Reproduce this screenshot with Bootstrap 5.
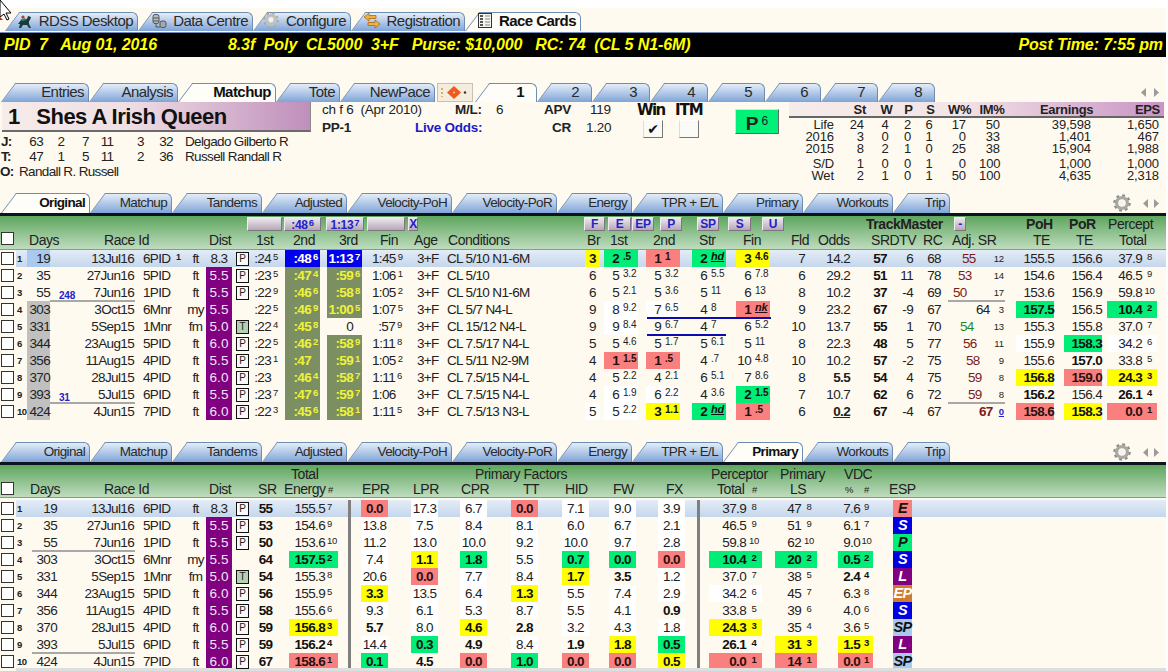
<!DOCTYPE html>
<html lang="en">
<head>
<meta charset="UTF-8">
<title>Race Cards</title>
<link href="https://cdn.jsdelivr.net/npm/bootstrap@5.3.3/dist/css/bootstrap.min.css" rel="stylesheet">
<style>
html, body { height: 671px; overflow: hidden; background: #fff; }
body { font: 13.5px/17px "Liberation Sans", Arial, sans-serif; letter-spacing: -.65px; color: #222; }
.pg { position: relative; width: 1166px; height: 671px; background: #fffaf0; overflow: hidden; }

/* tabs */
.topbar { height: 32px; padding-top: 12px; background: linear-gradient(#fff 8px, #fffaf0 8px); }
.tabrow { height: 20px; flex-wrap: nowrap; align-items: flex-end; }
.nav-link.rtab { position: relative; isolation: isolate; flex: none; height: 20px; padding: 0 5px 0 0; line-height: 19px; text-align: right; color: #2a2a2a; white-space: nowrap; }
.rtab::before, .rtab::after { content: ""; position: absolute; top: 0; bottom: 0; z-index: -1; background: linear-gradient(#e4edf8, #7fa4d8); border-top: 1px solid #6d8db5; }
.rtab::before { left: 0; width: 30px; border-left: 1px solid #6d8db5; transform-origin: left bottom; transform: skewX(-37deg); }
.rtab::after { left: 15px; right: 0; border-right: 1px solid #6d8db5; border-top-right-radius: 6px; }
.nav-link.rtab.on { z-index: 2; font-weight: 700; color: #111; }
.rtab.on::before, .rtab.on::after { background: #fffdf8; }
.tabrow.big { height: 19px; }
.big .nav-link.rtab { height: 19px; font-size: 15px; letter-spacing: -.55px; line-height: 18px; }
.nav-link.rtab svg { vertical-align: -2px; margin-right: 3px; }
.tab-ic { flex: none; width: 36px; height: 19px; margin: 0 2px; display: flex; align-items: center; justify-content: center; background: #f4ecdc; border: 1px solid #c8c0b0; }
.pager { flex: none; margin: 0 7px 0 auto; height: 19px; display: flex; align-items: center; gap: 6px; }
.gearbox { flex: none; margin: 0 7px 0 auto; height: 20px; display: flex; align-items: center; gap: 12px; }
.gearbox span { display: flex; gap: 4px; }

.raceband { height: 25px; background: #000; border-top: 1px solid #6d8db5; color: #ff0; font: italic 700 16px/24px "Liberation Sans", Arial, sans-serif; letter-spacing: -.1px; white-space: pre; padding: 0 3px 0 4px; }
.race-mid { margin-left: 71px; }
.tabwrap { margin-top: 26px; }

/* info block */
.info { height: 91px; }
.namebar { width: 309px; height: 30px; margin-left: 2px; padding-left: 6px; background: linear-gradient(90deg, #f6ece9, #f0dfe4 40%, #bf8fbc); border-bottom: 2px solid #6b6b6b; border-right: 1px solid #8a8a8a; color: #111; font: 700 22px/29px "Liberation Sans", Arial, sans-serif; letter-spacing: -.55px; white-space: pre; }
.namecol { flex: none; width: 316px; }
.jpad { padding-top: 2px; }
.jl { height: 15px; line-height: 15px; }
.midcol { flex: none; width: 473px; letter-spacing: -.25px; }
.il1 { height: 16px; line-height: 16px; }
.il2 { height: 19px; line-height: 19px; }
.winl { font: 700 15px/16px "DejaVu Sans", sans-serif; letter-spacing: -1px; color: #111; }
.win-t { letter-spacing: -1.6px; }
.livo { color: #1a1ac8; }
.vbox { height: 18px; margin-top: 2px; background: #fafaf6; border: 1px solid; border-color: #fff #777 #777 #ddd; font: 700 14px/16px "DejaVu Sans", sans-serif; color: #111; text-align: center; }
.pbtn.btn { position: absolute; left: 735px; top: 7px; width: 44px; height: 25px; padding: 0; border: 1px solid; border-color: #ddd #666 #666 #ddd; border-radius: 0; background: #00f078; font: 700 19px/22px "Liberation Sans", sans-serif; color: #222; }
.pbtn span { font-size: 12px; font-weight: 400; vertical-align: 5px; margin-left: 3px; }
.statcol { flex: none; width: 375px; font-size: 13px; letter-spacing: -.3px; }
.sh { height: 16px; line-height: 15px; background: linear-gradient(90deg, #f6ecea, #f3e4e6 45%, #c894c4); border-bottom: 2px solid #666; font-weight: 700; }
.sr { height: 12.2px; line-height: 12px; letter-spacing: -.1px; }
.sr.spaced { margin-top: 2px; }
.sr.sfirst { margin-top: 1px; }

/* grid strips */
.strip { display: grid; grid-auto-rows: 100%; white-space: nowrap; }
.blackline { height: 3px; background: #0d1420; }
.ghead { background: linear-gradient(#5ea65e, #bfdcbf); border-bottom: 1px solid #8d978d; }
.gh1 { height: 34px; }
.gh2 { height: 33px; }
.hstrip-a { height: 16px; line-height: 16px; font-size: 14px; letter-spacing: -.45px; }
.hstrip-b { height: 17px; line-height: 17px; font-size: 14px; letter-spacing: -.45px; }
.gh2 .hstrip-a { height: 17px; line-height: 19px; }
.gh2 .hstrip-b { height: 15px; line-height: 15px; }
.btn.hbtn { display: block; width: 100%; height: 14px; margin-top: 1px; padding: 0; border: 1px solid; border-color: #f0ecf0 #7d7480 #7d7480 #f0ecf0; border-radius: 0; background: linear-gradient(#efe8ef, #b4a8b6); color: #2222cc; font: 700 12px/12px "Liberation Sans", sans-serif; letter-spacing: -.3px; }
.btn.hbtn .up { width: auto; padding-left: 1px; }
.rw { height: 17px; line-height: 17px; }
.rw.hot { background: linear-gradient(#e4ecf7, #c5d7ec) right / calc(100% - 16px) 100% no-repeat; }
.rw.last { height: 15px; }
.botline { height: 3px; margin-left: 16px; background: #dedede; }
.rchk.form-check-input { display: block; width: 13px; height: 13px; margin: 2px 0 0; border: 1px solid #333; border-radius: 0; background: #fff; float: none; }
.rn { font-size: 9.5px; font-weight: 700; letter-spacing: -.5px; }
.days-g { background: #c0c0c0; }
.days-h { background: #a9c9ee; }
.gapn { color: #2222cc; font-size: 10px; font-weight: 700; line-height: 10px; letter-spacing: -.2px; align-self: end; }
.ptop { position: relative; top: -3px; font-size: 9px; font-weight: 700; }
.dist-p { background: #800080; color: #f1e6f1; font-size: 13.5px; letter-spacing: .1px; }
.pb { height: 14px; margin-top: 2px; border: 1px solid #111; background: #f8f8f8; font-size: 10px; line-height: 12px; text-align: center; letter-spacing: 0; }
.pb.tt { background: #b2d2b2; }
.up { display: inline-block; width: 9px; padding-left: 2px; text-align: left; font-size: 9.5px; letter-spacing: -.2px; vertical-align: 3px; line-height: 1; }
.up-e .up { width: 13px; padding-left: 2px; }
.up-v .up { width: 13px; padding: 0; text-align: center; }
.up-w .up { width: 15px; padding: 0; text-align: center; }
.up-x .up { width: 16px; padding: 0; text-align: center; }
.olv { background: #7b8f62; color: #f0f23a; font-weight: 700; }
.blu { background: #0000ee; color: #fff; font-weight: 700; }
.dg { display: inline-block; width: 15px; text-align: right; }
.dsp { font-size: 10px; margin-left: 4px; vertical-align: 3px; line-height: 1; letter-spacing: -.2px; }
.hd { font-style: italic; font-weight: 700; font-size: 11px; text-decoration: underline; }
.c-g { background: #00ee78; font-weight: 700; color: #111; }
.c-y { background: #ffff00; font-weight: 700; color: #111; }
.c-r { background: #fa8080; font-weight: 700; color: #2a1010; }
.c-b { font-weight: 700; color: #111; }
.c-w { background: #fff; }
.fw-sr { font-weight: 700; color: #111; }
.adj { color: #7a1a1a; }
.adj-k { color: #222; }
.adj-g { color: #1f8a1f; }
.rk { font-size: 9.5px; letter-spacing: -.1px; }
.rk-u { color: #2222cc; text-decoration: underline; font-weight: 700; }
.ruled { position: absolute; height: 2px; background: #a8a8a8; }
.ruled.bl { background: #0b0bb0; }
.sep { background: #7f7f7f; }
.esp { font: italic 700 14.5px/17px "Liberation Sans", sans-serif; text-align: center; letter-spacing: -.6px; }
.e-E { background: #fa8080; color: #111; }
.e-S { background: #0000e0; color: #fff; }
.e-P { background: #00ee78; color: #111; }
.e-L { background: #800080; color: #fff; }
.e-EP { background: #d07c30; color: #fff; }
.e-SP { background: #a9c9ee; color: #111; }
.grid2 { margin-top: 22px; }
.rows2 { margin-top: 2px; }
.cursor { position: absolute; left: 0; top: 0; z-index: 5; }
</style>
</head>
<body>
<div class="pg" id="pg"></div>

<script src="https://cdn.jsdelivr.net/npm/bootstrap@5.3.3/dist/js/bootstrap.bundle.min.js"></script>
<script>
const pg = document.getElementById('pg');

// one row of cells, given by their x edges; the gaps turn into empty grid tracks
function strip(cells, cls, ox) {
  let x = ox || 0, tracks = [], html = '';
  cells.forEach(c => {
    if (c[0] > x) { tracks.push((c[0] - x) + 'px'); html += '<div></div>'; }
    tracks.push((c[1] - c[0]) + 'px');
    html += '<div class="' + (c[2] || '') + '">' + (c[3] === undefined ? '' : c[3]) + '</div>';
    x = c[1];
  });
  return '<div class="strip ' + cls + '" style="grid-template-columns:' + tracks.join(' ') + '">' + html + '</div>';
}

function tabs(list, cls, start, extra) {
  let x = start, html = '';
  list.forEach(t => {
    if (t.raw) { html += t.raw; x = t.r; return; }
    html += '<a class="nav-link rtab' + (t.on ? ' on' : '') + '" style="width:' + (t.r - x) + 'px">' + t.l + '</a>';
    x = t.r;
  });
  return '<nav class="nav tabrow ' + cls + '" style="padding-left:' + start + 'px">' + html + (extra || '') + '</nav>';
}

const gear = (s, c1, c2) => '<svg width="' + s + '" height="' + s + '" viewBox="0 0 20 20"><circle cx="10" cy="10" r="8" fill="none" stroke="' + c2 + '" stroke-width="3.4" stroke-dasharray="3 3.28"/><circle cx="10" cy="10" r="6" fill="none" stroke="' + c1 + '" stroke-width="3.6"/><circle cx="10" cy="10" r="3" fill="#f7f3ea"/></svg>';
const arrows = '<svg width="6" height="9" viewBox="0 0 6 9"><path d="M5 0v9L0 4.5z" fill="#9a9a9a"/></svg><svg width="6" height="9" viewBox="0 0 6 9"><path d="M1 0v9l5-4.5z" fill="#9a9a9a"/></svg>';

const icHorse = '<svg width="15" height="13" viewBox="0 0 15 13"><path d="M1 9l3-4 6-1 1-3 3 1-1 3-1 1v3l2 4h-2l-2-3H6l-2 3H2l1-4z" fill="#1d3a3a"/><circle cx="6" cy="2" r="1.6" fill="#c33"/><path d="M4 4l4-1 1 2-4 1z" fill="#3a8a7a"/></svg>';
const icData = '<svg width="15" height="14" viewBox="0 0 15 14"><rect x="1" y="0.5" width="6" height="9" rx="2" fill="#b8bcc0" stroke="#555"/><rect x="8" y="7" width="6" height="6.5" rx="2" fill="#a0a8b0" stroke="#555"/><path d="M1 4h6M1 7h6" stroke="#555"/><path d="M4 10v3h4" fill="none" stroke="#555"/></svg>';
const icReg = '<svg width="16" height="15" viewBox="0 0 16 15"><path d="M5 0L0 4l5 4V5.5h7V2.5H5z" fill="#f2b040" stroke="#a86a10" stroke-width=".8"/><path d="M11 7l5 4-5 4v-2.5H4v-3h7z" fill="#f2b040" stroke="#a86a10" stroke-width=".8"/></svg>';
const icCard = '<svg width="14" height="15" viewBox="0 0 14 15"><rect x=".5" y=".5" width="13" height="14" fill="#f4f4f0" stroke="#333"/><path d="M2 3h3M2 6h3M2 9h3M2 12h3" stroke="#222" stroke-width="1.4"/><path d="M7 3h5M7 6h5M7 9h5M7 12h5" stroke="#888"/></svg>';
const icPace = '<svg width="30" height="15" viewBox="0 0 30 15"><path d="M2 3v9" stroke="#d8b060" stroke-width="2" stroke-dasharray="2 2"/><path d="M14 1l7 6.5-7 6.5-7-6.5z" fill="#ee5a20"/><circle cx="14" cy="7.5" r="1" fill="#fbd0a0"/><circle cx="25" cy="7.5" r="1.2" fill="#333"/></svg>';

const tabsA = [
  { l: 'Original', r: 90 }, { l: 'Matchup', r: 172 }, { l: 'Tandems', r: 262 }, { l: 'Adjusted', r: 347 },
  { l: 'Velocity-PoH', r: 452 }, { l: 'Velocity-PoR', r: 557 }, { l: 'Energy', r: 632 }, { l: 'TPR + E/L', r: 723 },
  { l: 'Primary', r: 803 }, { l: 'Workouts', r: 893 }, { l: 'Trip', r: 950 }
];

// table data
const R = [
  { days: 19, date: '13Jul16', id: '6PID', mk: '1', sf: 'ft', d: '8.3', p: 'P', a: ':24/5', b: ':48/6', c: '1:13/7', fin: '1:45/9', cond: 'CL 5/10 N1-6M', br: '3/y', p1: '2/.5/g', p2: '1/1/r', p3: '2/hd/g', p4: '3/4.6/y', fld: 7, odds: '14.2', sr: 57, dtv: 6, rc: 68, ax: 962, adj: 55, at: 'adj', rk: 12, poh: '155.5', por: '156.6', pct: '37.9/8', en: '155.5/7', f: ['0.0/r', '17.3', '6.7', '0.0/r', '7.1', '9.0', '3.9'], ls: '47/8', vdc: '7.6/9', esp: 'E', s2: 55 },
  { days: 35, date: '27Jun16', id: '5PID', sf: 'ft', d: '5.5', p: 'P', a: ':23/5', b: ':47/4', c: ':59/6', fin: '1:06/1', cond: 'CL 5/10', br: '6', p1: '5/3.2', p2: '5/3.2', p3: '6/5.5', p4: '6/7.8', fld: 6, odds: '29.2', sr: 51, dtv: 11, rc: 78, ax: 958, adj: 53, at: 'adj', rk: 14, poh: '154.6', por: '156.4', pct: '46.5/9', en: '154.6/9', f: ['13.8', '7.5', '8.4', '8.1', '6.0', '6.7', '2.1'], ls: '51/9', vdc: '6.1/7', esp: 'S', s2: 53 },
  { days: 55, date: '7Jun16', id: '1PID', sf: 'ft', d: '5.5', p: 'P', a: ':22/9', b: ':46/6', c: ':58/8', fin: '1:05/2', cond: 'CL 5/10 N1-6M', br: '6', p1: '5/2.1', p2: '5/3.6', p3: '5/11', p4: '6/13', fld: 8, odds: '10.2', sr: 37, dtv: -4, rc: 69, ax: 953, adj: 50, at: 'adj', rk: 17, poh: '153.6', por: '156.9', pct: '59.8/10', en: '153.6/10', f: ['11.2', '13.0', '10.0', '9.2', '10.0', '9.7', '2.8'], ls: '62/10', vdc: '9.0/10', esp: 'P', s2: 50, gap: '248' },
  { days: 303, date: '3Oct15', id: '6Mnr', sf: 'my', d: '5.5', a: ':22/5', b: ':46/9', c: '1:00/5', fin: '1:07/5', cond: 'CL 5/7 N4-L', br: '9', p1: '8/9.2/w', p2: '7/6.5/w', p3: '4/8', p4: '1/nk/r', fld: 9, odds: '23.2', sr: 67, dtv: -9, rc: 67, ax: 976, adj: 64, at: 'adj-k', rk: 3, poh: '157.5/g', por: '156.5', pct: '10.4/2/g', en: '157.5/2/g', f: ['7.4', '1.1/y', '1.8/g', '5.5', '0.7/g', '0.0/g', '0.0/r'], ls: '20/2/g', vdc: '0.5/2/g', esp: 'S', s2: 64 },
  { days: 331, date: '5Sep15', id: '1Mnr', sf: 'fm', d: '5.0', p: 'T', a: ':22/4', b: ':45/8', c: '0', fin: ':57/9', cond: 'CL 15/12 N4-L', br: '9', p1: '9/8.4/w', p2: '9/6.7', p3: '4/7', p4: '6/5.2', fld: 10, odds: '13.7', sr: 55, dtv: 1, rc: 70, ax: 960, adj: 54, at: 'adj-g', rk: 13, poh: '155.3', por: '155.8', pct: '37.0/7', en: '155.3/8', f: ['20.6', '0.0/r', '7.7', '8.4', '1.7/y', '3.5/b', '1.2'], ls: '38/5', vdc: '2.4/4/b', esp: 'L', s2: 54 },
  { days: 344, date: '23Aug15', id: '5PID', sf: 'ft', d: '6.0', p: 'P', a: ':22/5', b: ':46/2', c: ':58/9', fin: '1:11/8', cond: 'CL 7.5/17 N4-L', br: '5', p1: '5/4.6', p2: '5/1.7', p3: '5/6.1', p4: '5/11', fld: 8, odds: '22.3', sr: 48, dtv: 5, rc: 77, ax: 963, adj: 56, at: 'adj', rk: 11, poh: '155.9/w', por: '158.3/g', pct: '34.2/6/w', en: '155.9/5', f: ['3.3/y', '13.5', '6.4', '1.3/y', '5.5', '7.4', '2.9'], ls: '45/7', vdc: '6.3/8', esp: 'EP', s2: 56 },
  { days: 356, date: '11Aug15', id: '4PID', sf: 'ft', d: '5.5', p: 'P', a: ':23/1', b: ':47', c: ':59/1', fin: '1:05/2', cond: 'CL 5/11 N2-9M', br: '4', p1: '1/1.5/r', p2: '1/.5/r', p3: '4/.7', p4: '10/4.8', fld: 10, odds: '10.2', sr: 57, dtv: -2, rc: 75, ax: 966, adj: 58, at: 'adj', rk: 9, poh: '155.6', por: '157.0/b', pct: '33.8/5', en: '155.6/6', f: ['9.3', '6.1', '5.3', '8.7', '5.5', '4.1', '0.9/b'], ls: '39/6', vdc: '4.0/6', esp: 'S', s2: 58 },
  { days: 370, date: '28Jul15', id: '4PID', sf: 'ft', d: '6.0', p: 'P', a: ':23', b: ':46/4', c: ':58/7', fin: '1:11/6', cond: 'CL 7.5/15 N4-L', br: '4', p1: '5/2.2', p2: '4/2.1', p3: '6/5.1', p4: '7/8.6', fld: 8, odds: '<b>5.5</b>', sr: 54, dtv: 4, rc: 75, ax: 968, adj: 59, at: 'adj', rk: 8, poh: '156.8/y', por: '159.0/r', pct: '24.3/3/y', en: '156.8/3/y', f: ['5.7/b', '8.0', '4.6/y', '2.8/b', '3.2', '4.3', '1.8'], ls: '35/4', vdc: '3.6/5', esp: 'SP', s2: 59 },
  { days: 393, date: '5Jul15', id: '6PID', sf: 'ft', d: '5.5', p: 'P', a: ':23/7', b: ':47/6', c: ':59/7', fin: '1:06', cond: 'CL 7.5/15 N4-L', br: '4', p1: '6/1.9/w', p2: '6/2.2/w', p3: '4/3.6', p4: '2/1.5/g', fld: 7, odds: '10.7', sr: 62, dtv: 6, rc: 72, ax: 968, adj: 59, at: 'adj', rk: 8, poh: '156.2/b', por: '156.4', pct: '26.1/4/b', en: '156.2/4/b', f: ['14.4', '0.3/g', '4.9/b', '8.4', '1.9/b', '1.8/y', '0.5/g'], ls: '31/3/y', vdc: '1.5/3/y', esp: 'L', s2: 59, gap: '31' },
  { days: 424, date: '4Jun15', id: '7PID', sf: 'ft', d: '6.0', p: 'P', a: ':22/3', b: ':45/6', c: ':58/1', fin: '1:11/5', cond: 'CL 7.5/13 N3-L', br: '5/w', p1: '5/2.2/w', p2: '3/1.1/y', p3: '2/hd/g', p4: '1/.5/r', fld: 6, odds: '<b><u>0.2</u></b>', sr: 67, dtv: -4, rc: 67, ax: 979, adj: 67, at: 'adj fw-bold', rk: 0, poh: '158.6/r', por: '158.3/y', pct: '0.0/1/r', en: '158.6/1/r', f: ['0.1/g', '4.5/b', '0.0/r', '1.0/g', '0.0/r', '0.0/r', '0.5/y'], ls: '14/1/r', vdc: '0.0/1/r', esp: 'SP', s2: 67 }
];

const colourOf = s => /^[gyrbw]$/.test(s || '') ? ' c-' + s : '';
// "value/sup/colour" -> cell for a right-aligned number
function num(x0, x1, spec, cls) {
  const p = String(spec).split('/');
  let col = '', sup = '';
  if (p.length === 3) { sup = p[1]; col = p[2]; }
  else if (p.length === 2) { if (/^[gyrbw]$/.test(p[1])) col = p[1]; else sup = p[1]; }
  return [x0, x1, 'text-end ' + (cls || '') + colourOf(col), p[0] + '<span class="up">' + sup + '</span>'];
}
// running position: finish place plus lengths behind
function pos(x0, x1, spec) {
  const p = spec.split('/');
  const sup = p[1] === 'hd' || p[1] === 'nk' ? '<span class="dsp hd">' + p[1] + '</span>' : '<span class="dsp">' + p[1] + '</span>';
  return [x0, x1, colourOf(p[2]), '<span class="dg">' + p[0] + '</span>' + sup];
}
const cent = (x0, x1, spec) => { const p = spec.split('/'); return [x0, x1, 'text-center' + colourOf(p[1]), p[0]]; };

// shared left part of a row
function leftCells(r, i, t2) {
  const c = [
    [1, 15, '', '<input type="checkbox" class="form-check-input rchk">'],
    [17, 27, 'rn', i + 1]
  ];
  if (t2) c.push([27, 57, 'text-end', r.days]);
  else {
    c.push([27, 50, 'text-end ' + (i === 0 ? 'days-h' : i > 2 ? 'days-g' : ''), r.days]);
    if (r.gap) c.push([59, 76, 'gapn', r.gap]);
  }
  c.push([80, 134, 'text-end', r.date], [143, 176, '', r.id], [176, 186, '', r.mk && !t2 ? '<span class="ptop">' + r.mk + '</span>' : ''],
    [186, 205, 'text-center', r.sf],
    [206, 232, 'text-center ' + (i === 0 ? '' : 'dist-p'), r.d],
    [236, 249, r.p ? 'pb' + (r.p === 'T' ? ' tt' : '') : '', r.p || '']);
  return c;
}

function row1(r, i) {
  const c = leftCells(r, i, false);
  const hot = i === 0;
  const c3 = r.c === '0' ? [327, 362, 'text-end', '0<span class="up"></span>'] : num(327, 362, r.c, hot ? 'blu' : 'olv');
  c.push(num(252, 280, r.a, ''), num(285, 320, r.b, hot ? 'blu' : 'olv'), c3, num(372, 404, r.fin, ''),
    [417, 440, '', '3+F'], [447, 580, '', r.cond], cent(585, 600, r.br),
    pos(604, 638, r.p1), pos(646, 680, r.p2), pos(692, 726, r.p3), pos(736, 770, r.p4));
  c.push([784, 805, 'text-end', r.fld], [815, 850, 'text-end', r.odds], [870, 890, 'text-center fw-sr', r.sr], [895, 913, 'text-end', r.dtv], [925, 943, 'text-center', r.rc],
    [r.ax, r.ax + 14, r.at, r.adj], [993, 1004, 'text-end rk' + (r.rk === 0 ? ' rk-u' : ''), r.rk]);
  const n = s => { const p = s.split('/'); return [p[0], colourOf(p[1])]; };
  const a = n(r.poh), b = n(r.por);
  c.push([1016, 1054, 'text-end' + a[1], a[0]], [1064, 1102, 'text-end' + b[1], b[0]], num(1107, 1157, r.pct, 'up-w'));
  return strip(c, 'rw' + (hot ? ' hot' : ''));
}

function row2(r, i) {
  const c = leftCells(r, i, true);
  c.push([258, 273, 'text-center fw-sr', r.s2], num(289, 338, r.en, 'up-e'), [348, 351, 'sep']);
  const xs = [361, 411, 460, 511, 562, 609, 658];
  r.f.forEach((v, k) => {
    const p = v.split('/');
    c.push([xs[k], xs[k] + 27, 'text-center ' + (p[1] ? colourOf(p[1]) : 'c-w'), p[0]]);
  });
  c.push([697, 700, 'sep'], num(709, 762, r.pct, 'up-x'), num(775, 817, r.ls, 'up-x'), num(838, 873, r.vdc, 'up-v'),
    [893, 912, 'esp e-' + r.esp, r.esp]);
  return strip(c, 'rw' + (i === 0 ? ' hot' : '') + (i === 9 ? ' last' : ''));
}

const cursor = '<svg class="cursor" width="14" height="22" viewBox="0 0 14 22"><path d="M0 0v17l4-3 3 6 2-1-3-6h5z" fill="#fff" stroke="#000"/><path d="M0 17l3 3h-3z" fill="#c22"/></svg>';
const hb = t => '<button class="btn hbtn" type="button">' + t + '</button>';
const box = '<input type="checkbox" class="form-check-input rchk mt-0">';
const num2 = t => '<span class="me-2">' + t + '</span>';

let html = cursor;
html += '<div class="topbar">' + tabs([
  { l: icHorse + ' RDSS Desktop', r: 138 }, { l: icData + ' Data Centre', r: 253 },
  { l: gear(16, '#c0c0bc', '#a8a8a4') + ' Configure', r: 351 }, { l: icReg + ' Registration', r: 465 },
  { l: icCard + ' Race Cards', r: 581, on: 1 }
], 'big', 5) + '</div>';
html += '<div class="raceband d-flex"><span>PID  7   Aug 01, 2016</span><span class="race-mid">8.3f  Poly  CL5000  3+F   Purse: $10,000   RC: 74  (CL 5 N1-6M)</span><span class="ms-auto">Post Time: 7:55 pm</span></div>';

html += '<div class="tabwrap">' + tabs([
  { l: 'Entries', r: 89 }, { l: 'Analysis', r: 178 }, { l: 'Matchup', r: 276, on: 1 }, { l: 'Tote', r: 340 }, { l: 'NewPace', r: 435 },
  { raw: '<div class="tab-ic">' + icPace + '</div>', r: 475 },
  { l: num2('1'), r: 537, on: 1 }, { l: num2('2'), r: 592 }, { l: num2('3'), r: 650 }, { l: num2('4'), r: 708 },
  { l: num2('5'), r: 765 }, { l: num2('6'), r: 821 }, { l: num2('7'), r: 878 }, { l: num2('8'), r: 935 }
], 'big', 1, '<div class="pager">' + arrows + '</div>') + '</div>';

// info block
const jl = (lab, n, name) => strip([[1, 15, 'fw-bold', lab], [28, 43, 'text-end', n[0]], [56, 66, 'text-center', n[1]], [80, 91, 'text-center', n[2]], [100, 114, 'text-center', n[3]], [136, 145, 'text-center', n[4]], [158, 174, 'text-center', n[5]], [185, 310, '', name]], 'jl');
const sc = (a, cls) => strip([[790, 835, 'text-end', a[0]], [850, 865, 'text-end', a[1]], [880, 892, 'text-center', a[2]], [903, 914, 'text-center', a[3]], [925, 935, 'text-center', a[4]], [950, 967, 'text-end', a[5]], [980, 1001, 'text-end', a[6]], [1040, 1092, 'text-end', a[7]], [1110, 1160, 'text-end', a[8]]], 'sr ' + cls, 790);
html += '<div class="info d-flex position-relative">'
  + '<div class="namecol"><div class="namebar">1   Shes A Irish Queen</div><div class="jpad">'
  + jl('J:', [63, 2, 7, 11, 3, 32], 'Delgado Gilberto R') + jl('T:', [47, 1, 5, 11, 2, 36], 'Russell Randall R')
  + strip([[0, 15, 'fw-bold', 'O:'], [19, 200, '', 'Randall R. Russell']], 'jl') + '</div></div>'
  + '<div class="midcol">'
  + strip([[322, 430, '', 'ch f 6&nbsp; (Apr 2010)'], [455, 483, 'fw-bold', 'M/L:'], [496, 505, '', '6'], [544, 572, 'fw-bold', 'APV'], [590, 612, '', '119'], [637, 665, 'winl win-t', 'Win'], [675, 705, 'winl', 'ITM']], 'il1', 316)
  + strip([[322, 352, 'fw-bold', 'PP-1'], [415, 484, 'fw-bold livo', 'Live Odds:'], [552, 572, 'fw-bold', 'CR'], [586, 612, '', '1.20'], [643, 663, 'vbox', '✔'], [679, 699, 'vbox', '']], 'il2', 316)
  + '</div><button class="btn pbtn" type="button">P<span>6</span></button>'
  + '<div class="statcol">'
  + strip([[850, 866, 'text-end', 'St'], [880, 893, 'text-center', 'W'], [903, 914, 'text-center', 'P'], [925, 936, 'text-center', 'S'], [948, 970, 'text-center', 'W%'], [978, 1006, 'text-center', 'IM%'], [1040, 1092, 'text-end', 'Earnings'], [1120, 1160, 'text-end', 'EPS']], 'sh', 789)
  + sc(['Life', 24, 4, 2, 6, 17, 50, '39,598', '1,650'], 'sfirst') + sc(['2016', 3, 0, 0, 1, 0, 33, '1,401', '467'], '')
  + sc(['2015', 8, 2, 1, 0, 25, 38, '15,904', '1,988'], '') + sc(['S/D', 1, 0, 0, 1, 0, 100, '1,000', '1,000'], 'spaced')
  + sc(['Wet', 2, 1, 0, 1, 50, 100, '4,635', '2,318'], '') + '</div></div>';

const rightBox = '<div class="gearbox">' + gear(18, '#a8a8a4', '#8c8c88') + '<span>' + arrows + '</span></div>';
// first grid
html += tabs(tabsA.map((t, i) => ({ l: t.l, r: t.r, on: i === 0 })), '', 1, rightBox) + '<div class="blackline"></div>';
html += '<div class="ghead gh1">'
  + strip([[247, 282, '', hb('')], [284, 321, '', hb(':48<span class="up">6</span>')], [326, 364, '', hb('1:13<span class="up">7</span>')], [367, 405, '', hb('')], [408, 418, '', hb('X')],
    [584, 605, '', hb('F')], [608, 631, '', hb('E')], [632, 654, '', hb('EP')], [660, 682, '', hb('P')], [697, 719, '', hb('SP')], [728, 751, '', hb('S')], [762, 784, '', hb('U')],
    [866, 946, 'fw-bold', 'TrackMaster'], [954, 966, '', hb('-')], [1026, 1055, 'fw-bold', 'PoH'], [1069, 1098, 'fw-bold', 'PoR'], [1108, 1162, '', 'Percept']], 'hstrip-a')
  + strip([[1, 15, '', box], [29, 60, '', 'Days'], [104, 150, '', 'Race Id'], [209, 234, '', 'Dist'], [256, 274, '', '1st'], [293, 315, '', '2nd'], [339, 360, '', '3rd'], [380, 400, '', 'Fin'], [414, 438, '', 'Age'], [448, 512, '', 'Conditions'], [587, 602, '', 'Br'], [610, 629, '', '1st'], [653, 676, '', '2nd'], [699, 718, '', 'Str'], [743, 763, '', 'Fin'], [791, 809, '', 'Fld'], [818, 853, '', 'Odds'], [871, 922, '', 'SRDTV'], [923, 944, '', 'RC'], [952, 1000, '', 'Adj. SR'], [1033, 1052, '', 'TE'], [1076, 1095, '', 'TE'], [1119, 1158, '', 'Total']], 'hstrip-b')
  + '</div>';
html += R.map(row1).join('');
// second grid
html += '<div class="grid2">' + tabs(tabsA.map((t, i) => ({ l: t.l, r: t.r, on: i === 8 })), '', 1, rightBox) + '<div class="blackline"></div>';
html += '<div class="ghead gh2">'
  + strip([[291, 325, '', 'Total'], [475, 570, '', 'Primary Factors'], [711, 770, '', 'Perceptor'], [780, 828, '', 'Primary'], [844, 872, '', 'VDC']], 'hstrip-a')
  + strip([[1, 15, '', box], [30, 60, '', 'Days'], [104, 150, '', 'Race Id'], [209, 234, '', 'Dist'], [258, 276, '', 'SR'], [284, 325, '', 'Energy'], [328, 336, 'rk', '#'], [362, 390, '', 'EPR'], [413, 440, '', 'LPR'], [461, 490, '', 'CPR'], [523, 540, '', 'TT'], [565, 590, '', 'HID'], [613, 635, '', 'FW'], [666, 685, '', 'FX'], [717, 747, '', 'Total'], [752, 760, 'rk', '#'], [790, 810, '', 'LS'], [845, 854, 'rk', '%'], [864, 872, 'rk', '#'], [889, 915, '', 'ESP']], 'hstrip-b')
  + '</div><div class="rows2">' + R.map(row2).join('') + '</div><div class="botline"></div></div>';
// rules drawn over the grid
const rule = (x, y, w, c) => '<div class="ruled ' + (c || '') + '" style="left:' + x + 'px;top:' + y + 'px;width:' + w + 'px"></div>';
html += rule(50, 300, 85) + rule(50, 402, 85) + rule(948, 300, 57) + rule(948, 402, 57) + rule(647, 317, 124, 'bl') + rule(647, 334, 79, 'bl') + rule(32, 550, 103) + rule(32, 652, 103);
pg.innerHTML = html;
</script>
</body>
</html>
